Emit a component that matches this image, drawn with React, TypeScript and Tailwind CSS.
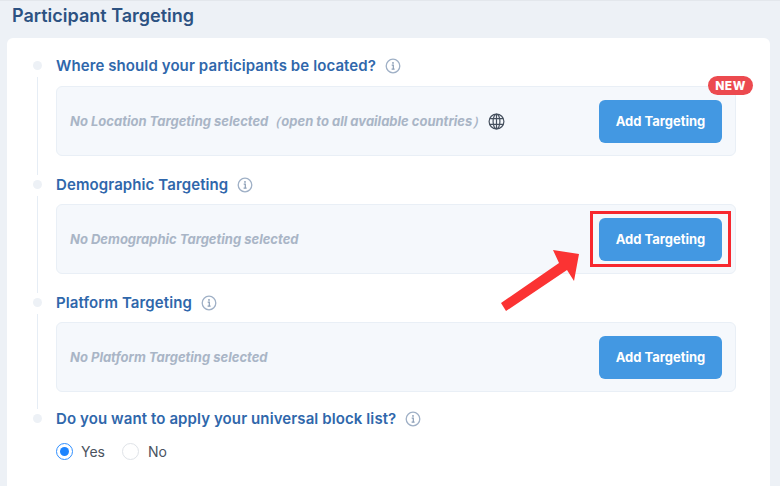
import React from 'react';

function InfoIcon() {
  return (
    <svg width="16" height="16" viewBox="0 0 16 16" fill="none" className="shrink-0">
      <circle cx="8" cy="8" r="6.8" stroke="#9fb0c6" strokeWidth="1.3" />
      <circle cx="8" cy="4.9" r="0.9" fill="#8a9db5" />
      <path d="M6.7 7.1H8.3V11M6.6 11.1H9.6" stroke="#8a9db5" strokeWidth="1.2" />
    </svg>
  );
}

function GlobeIcon() {
  return (
    <svg width="17" height="17" viewBox="0 0 17 17" fill="none" stroke="#46505e" strokeWidth="1.2">
      <circle cx="8.5" cy="8.5" r="7.4" />
      <ellipse cx="8.5" cy="8.5" rx="3.4" ry="7.4" />
      <path d="M8.5 1V16M1.8 5.6H15.2M1.8 11.4H15.2" />
    </svg>
  );
}

function Dot({ last }: { last?: boolean }) {
  return (
    <div className="w-[10px] flex flex-col items-center shrink-0">
      <div className="w-[9px] h-[9px] rounded-full bg-[#edf1f6] mt-[5px] shrink-0" />
      {!last && <div className="w-px flex-1 bg-[#e6edf5] mt-[7px]" />}
    </div>
  );
}

function Heading({ children }: { children: React.ReactNode }) {
  return (
    <div className="flex items-center gap-[9px] h-[20px]">
      <span className="text-[15px] leading-[20px] font-semibold text-[#2f67ab] tracking-[0.1px]">{children}</span>
      <InfoIcon />
    </div>
  );
}

function TargetBox({ text, isNew, globe, topGap }: { text: string; isNew?: boolean; globe?: boolean; topGap: string }) {
  return (
    <div className={`relative ${topGap} w-[680px] h-[70px] rounded-md border border-[#e9eff6] bg-[#f5f8fc] flex items-center justify-between pl-[13px] pr-[13px]`}>
      <div className="flex items-center gap-[3px]">
        <span className="text-[13px] pt-px font-bold italic text-[#a9b5c6]">{text}</span>
        {globe && <GlobeIcon />}
      </div>
      <button className="w-[123px] h-[43px] pt-px rounded-md bg-[#4398e2] text-white text-[13px] font-bold">
        Add Targeting
      </button>
      {isNew && (
        <span className="absolute -top-[11px] -right-[18px] w-[45px] h-[19px] rounded-full bg-[#ec4a4f] text-white text-[12px] font-extrabold tracking-[0.5px] flex items-center justify-center">
          NEW
        </span>
      )}
    </div>
  );
}

export default function App() {
  return (
    <div className="relative w-[780px] h-[486px] overflow-hidden bg-[#edf1f6] border-t border-[#e3e7ec] font-['Inter',sans-serif]">
      <h2 className="pl-3 pt-[5px] h-[37px] text-[18px] leading-[20px] font-semibold text-[#2c5282]">Participant Targeting</h2>
      <div className="ml-[7px] w-[763px] h-[448px] bg-white rounded-t-md pl-[25px] pt-[18px]">
        <div className="flex gap-[14px] h-[119px]">
          <Dot />
          <div>
            <Heading>Where should your participants be located?</Heading>
            <TargetBox topGap="mt-[10px]" globe isNew text="No Location Targeting selected（open to all available countries）" />
          </div>
        </div>
        <div className="flex gap-[14px] h-[118px]">
          <Dot />
          <div>
            <Heading>Demographic Targeting</Heading>
            <TargetBox topGap="mt-[9px]" text="No Demographic Targeting selected" />
          </div>
        </div>
        <div className="flex gap-[14px] h-[116px]">
          <Dot />
          <div>
            <Heading>Platform Targeting</Heading>
            <TargetBox topGap="mt-[9px]" text="No Platform Targeting selected" />
          </div>
        </div>
        <div className="flex gap-[14px]">
          <Dot last />
          <div>
            <Heading>Do you want to apply your universal block list?</Heading>
            <div className="flex items-center mt-[12px] text-[14px] text-[#4a5360]">
              <span className="w-[17px] h-[17px] rounded-full border border-[#2f8fff] flex items-center justify-center">
                <span className="w-[9px] h-[9px] rounded-full bg-[#1c84ff]" />
              </span>
              <span className="ml-[8px]">Yes</span>
              <span className="ml-[17px] w-[17px] h-[17px] rounded-full border border-[#dfe3e8]" />
              <span className="ml-[9px]">No</span>
            </div>
          </div>
        </div>
      </div>
      {/* annotation over the second button */}
      <div className="absolute left-[590px] top-[210px] w-[141px] h-[56px] border-[3px] border-[#f7282f]" />
      <svg className="absolute left-[500px] top-[248px]" width="82" height="65" viewBox="0 0 82 65">
        <path d="M1 54L59 14L53 1L79 5L74 32L67 21L6 62Z" fill="#fb3333" />
      </svg>
    </div>
  );
}
